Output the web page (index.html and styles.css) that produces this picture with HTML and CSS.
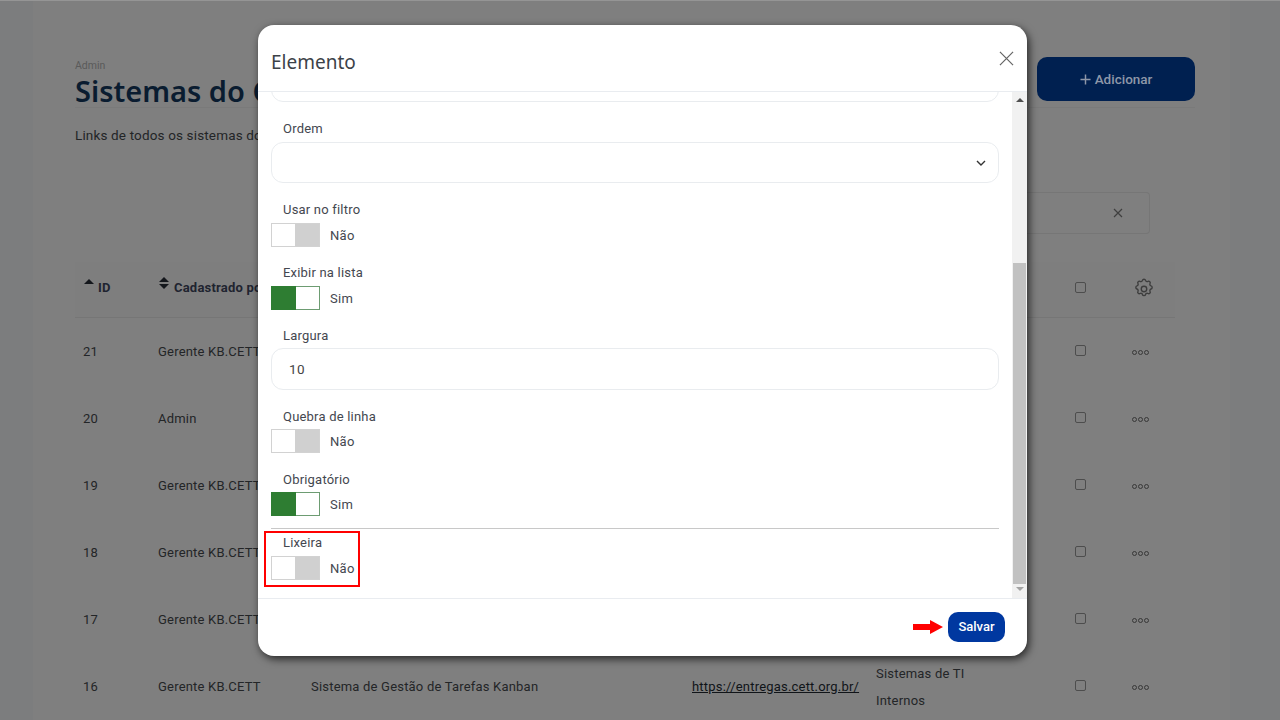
FILE: index.html
```html
<!DOCTYPE html>
<html lang="pt-BR">
<head>
<meta charset="utf-8">
<title>Sistemas do CETT</title>
<link rel="stylesheet" href="styles.css">
</head>
<body>
<main class="page">
  <header class="page-head">
    <div class="head-text">
      <div class="crumb">Admin</div>
      <h1>Sistemas do CETT</h1>
    </div>
    <button class="add-btn"><svg class="plus" viewBox="0 0 12 12"><path d="M6 .5v11M.5 6h11"/></svg>Adicionar</button>
  </header>
  <p class="intro">Links de todos os sistemas do</p>
  <div class="search-row">
    <div class="search"><svg class="x-small" viewBox="0 0 10 10"><path d="M1 1l8 8M9 1l-8 8"/></svg></div>
  </div>
  <section class="table">
    <div class="row head">
      <div class="c-id"><span class="sort up"></span>ID</div>
      <div class="c-by"><span class="sort both"></span>Cadastrado por</div>
      <div class="c-name"></div><div class="c-link"></div><div class="c-cat"></div>
      <div class="c-check"><span class="check"></span></div>
      <div class="c-menu"><svg class="gear" viewBox="0 0 24 24"><path d="M10.3 2.6c.4-1.6 3-1.6 3.4 0a1.8 1.8 0 0 0 2.6 1.1c1.4-.9 3.2.9 2.3 2.3a1.8 1.8 0 0 0 1.1 2.6c1.6.4 1.6 3 0 3.4a1.8 1.8 0 0 0-1.1 2.6c.9 1.4-.9 3.2-2.3 2.3a1.8 1.8 0 0 0-2.6 1.1c-.4 1.6-3 1.6-3.4 0a1.8 1.8 0 0 0-2.6-1.1c-1.4.9-3.2-.9-2.3-2.3a1.8 1.8 0 0 0-1.1-2.6c-1.6-.4-1.6-3 0-3.4A1.8 1.8 0 0 0 5.4 6c-.9-1.4.9-3.2 2.3-2.3a1.8 1.8 0 0 0 2.6-1.1z"/><circle cx="12" cy="12" r="3"/></svg></div>
    </div>
    <div class="row"><div class="c-id">21</div><div class="c-by">Gerente KB.CETT</div><div class="c-name"></div><div class="c-link"></div><div class="c-cat"></div><div class="c-check"><span class="check"></span></div><div class="c-menu"><span class="dots"><i></i><i></i><i></i></span></div></div>
    <div class="row"><div class="c-id">20</div><div class="c-by">Admin</div><div class="c-name"></div><div class="c-link"></div><div class="c-cat"></div><div class="c-check"><span class="check"></span></div><div class="c-menu"><span class="dots"><i></i><i></i><i></i></span></div></div>
    <div class="row"><div class="c-id">19</div><div class="c-by">Gerente KB.CETT</div><div class="c-name"></div><div class="c-link"></div><div class="c-cat"></div><div class="c-check"><span class="check"></span></div><div class="c-menu"><span class="dots"><i></i><i></i><i></i></span></div></div>
    <div class="row"><div class="c-id">18</div><div class="c-by">Gerente KB.CETT</div><div class="c-name"></div><div class="c-link"></div><div class="c-cat"></div><div class="c-check"><span class="check"></span></div><div class="c-menu"><span class="dots"><i></i><i></i><i></i></span></div></div>
    <div class="row"><div class="c-id">17</div><div class="c-by">Gerente KB.CETT</div><div class="c-name"></div><div class="c-link"></div><div class="c-cat"></div><div class="c-check"><span class="check"></span></div><div class="c-menu"><span class="dots"><i></i><i></i><i></i></span></div></div>
    <div class="row"><div class="c-id">16</div><div class="c-by">Gerente KB.CETT</div><div class="c-name">Sistema de Gestão de Tarefas Kanban</div><div class="c-link"><a href="#">https://entregas.cett.org.br/</a></div><div class="c-cat">Sistemas de TI Internos</div><div class="c-check"><span class="check"></span></div><div class="c-menu"><span class="dots"><i></i><i></i><i></i></span></div></div>
  </section>
</main>

<div class="modal">
  <div class="modal-head">
    <h2>Elemento</h2>
    <svg class="close" viewBox="0 0 16 16"><path d="M1 1l14 14M15 1L1 15"/></svg>
  </div>
  <div class="modal-mid">
    <div class="modal-body">
      <div class="input clipped"></div>
      <div class="field wide-gap">
        <label class="roomy">Ordem</label>
        <div class="input select"><svg class="chev" viewBox="0 0 10 6"><path d="M1 1l4 4 4-4"/></svg></div>
      </div>
      <div class="field">
        <label>Usar no filtro</label>
        <div class="toggle-line"><span class="toggle off"><b></b></span><span class="toggle-text">Não</span></div>
      </div>
      <div class="field">
        <label>Exibir na lista</label>
        <div class="toggle-line"><span class="toggle on"><b></b></span><span class="toggle-text">Sim</span></div>
      </div>
      <div class="field wide-gap">
        <label>Largura</label>
        <div class="input tall">10</div>
      </div>
      <div class="field wide-gap">
        <label class="snug">Quebra de linha</label>
        <div class="toggle-line"><span class="toggle off"><b></b></span><span class="toggle-text">Não</span></div>
      </div>
      <div class="field tight">
        <label class="snug">Obrigatório</label>
        <div class="toggle-line"><span class="toggle on"><b></b></span><span class="toggle-text">Sim</span></div>
      </div>
      <hr>
      <div class="field">
        <label>Lixeira</label>
        <div class="toggle-line"><span class="toggle off"><b></b></span><span class="toggle-text">Não</span></div>
      </div>
    </div>
    <div class="scrollbar">
      <span class="arrow-up"></span>
      <span class="thumb"></span>
      <span class="arrow-down"></span>
    </div>
  </div>
  <div class="modal-foot">
    <svg class="red-arrow" viewBox="0 0 30 14"><path d="M0 4h17V0l13 7-13 7v-4H0z"/></svg>
    <button class="save">Salvar</button>
  </div>
  <div class="highlight"></div>
</div>
</body>
</html>
```
FILE: styles.css
```css
* { box-sizing: border-box; }
html, body { margin: 0; height: 100%; overflow: hidden; }
body {
  background: #7c7d7e;
  border-top: 1px solid #959595;
  font-family: Roboto, "Liberation Sans", sans-serif;
  color: #232527;
}
.page {
  margin-left: 33px;
  width: 1197px;
  height: 719px;
  padding: 56px 35px 0 42px;
  background: #7f7f7f;
  overflow: hidden;
}
.page-head {
  display: flex;
  justify-content: space-between;
  align-items: flex-start;
  height: 51px;
  border-bottom: 1px solid #7a7a7a;
}
.crumb { font-size: 10.5px; line-height: 14px; margin-top: 2px; margin-bottom: -1px; color: #5a5a5a; }
h1 {
  margin: 0;
  font-family: "Noto Sans", sans-serif;
  font-size: 29px;
  line-height: 38px;
  font-weight: 600;
  color: #0a1c30;
  white-space: nowrap;
}
.add-btn {
  width: 158px;
  height: 44px;
  border: 0;
  border-radius: 10px;
  background: #002050;
  color: #8e97a8;
  font: 500 13.5px Roboto, sans-serif;
  display: flex;
  align-items: center;
  justify-content: center;
  gap: 4px;
}
.plus { width: 11px; height: 11px; fill: none; stroke: #8e97a8; stroke-width: 1.6; }
.intro { margin: 19px 0 0; font-size: 13.5px; line-height: 16px; letter-spacing: .15px; }
.search-row { display: flex; justify-content: flex-end; margin-top: 49px; padding-right: 45px; }
.search {
  width: 300px;
  height: 42px;
  border: 1px solid #767676;
  border-left: 0;
  border-radius: 0 4px 4px 0;
  display: flex;
  justify-content: flex-end;
  align-items: center;
  padding-right: 26px;
}
.x-small { width: 10px; height: 10px; fill: none; stroke: #3f3f3f; stroke-width: 1.2; }
.table { width: 1100px; margin-top: 28px; }
.row {
  display: grid;
  grid-template-columns: 75px 153px 381px 184px 202px 62px 43px;
  height: 67px;
  align-items: center;
  font-size: 13px;
  line-height: 28px;
  letter-spacing: .2px;
}
.row > div { padding-left: 8px; }
.row.head {
  height: 56px;
  padding-bottom: 3px;
  background: #7e7e7e;
  border-bottom: 1px solid #767676;
  font-weight: 700;
  color: #1f2430;
}
.sort { display: inline-block; width: 15px; height: 10px; position: relative; vertical-align: 3px; }
.sort.both { width: 16px; }
.sort::before, .sort.both::after {
  content: "";
  position: absolute;
  left: 1px;
  border-left: 5px solid transparent;
  border-right: 5px solid transparent;
}
.sort.up::before { top: 0; border-bottom: 5px solid #14171c; }
.sort.both::before { top: -2px; border-bottom: 5px solid #14171c; }
.sort.both::after { top: 5px; border-top: 5px solid #14171c; }
.c-link a { color: #101418; }
.c-cat { line-height: 27px; padding-right: 85px; }
.c-check { display: flex; }
.check {
  width: 11px;
  height: 11px;
  border: 1.4px solid #4d4d4d;
  border-radius: 2px;
  display: block;
  margin: -2px 0 0 -3px;
}
.c-menu { display: flex; }
.dots { display: flex; gap: 1px; margin: 2px 0 0 -8px; }
.dots i { width: 5px; height: 5px; border: 1.6px solid #383838; border-radius: 50%; display: block; }
.gear { width: 22px; height: 22px; margin: 1px 0 0 -7px; fill: none; stroke: #3d3d3d; stroke-width: 1.5; }

/* Modal */
.modal {
  position: absolute;
  left: 258px;
  top: 25px;
  width: 769px;
  height: 631px;
  background: #fff;
  border-radius: 16px;
  box-shadow: 2px 3px 8px rgba(0,0,0,.7);
  display: flex;
  flex-direction: column;
  overflow: hidden;
}
.modal-head {
  height: 67px;
  flex: none;
  border-bottom: 1px solid #e9ecf0;
  display: flex;
  justify-content: space-between;
  align-items: center;
  padding: 0 13px 0 13px;
}
h2 {
  margin: 8px 0 0;
  font-family: "Noto Sans", sans-serif;
  font-size: 19px;
  font-weight: 400;
  color: #3c4248;
}
.close { width: 15px; height: 15px; margin-top: 1px; fill: none; stroke: #666; stroke-width: 1.3; }
.modal-mid { flex: 1; display: flex; min-height: 0; }
.modal-body { flex: 1; padding: 0 13px; overflow: hidden; }
.scrollbar {
  width: 15px;
  flex: none;
  background: #f1f1f1;
  display: flex;
  flex-direction: column;
  align-items: center;
  padding: 6px 1px 4px;
}
.thumb { width: 13px; height: 321px; background: #c1c1c1; margin: 161px 0 3px; }
.arrow-up { border-left: 4px solid transparent; border-right: 4px solid transparent; border-bottom: 4px solid #505050; }
.arrow-down { border-left: 4px solid transparent; border-right: 4px solid transparent; border-top: 4px solid #a3a3a3; }
.input {
  height: 41px;
  border: 1px solid #e9ecef;
  border-radius: 12px;
  display: flex;
  align-items: center;
  padding: 0 17px;
  font-size: 13.5px;
  letter-spacing: .3px;
  color: #444;
}
.clipped { margin-top: -31px; margin-bottom: 17px; }
.select { justify-content: flex-end; padding-right: 12px; }
.tall { height: 42px; }
.chev { width: 10px; height: 6px; fill: none; stroke: #333; stroke-width: 1.4; }
.field { margin-bottom: 16px; }
.field.wide-gap { margin-bottom: 17px; }
.field.tight { margin-bottom: 12px; }
label {
  display: block;
  height: 20px;
  line-height: 20px;
  padding-left: 12px;
  margin-bottom: 2px;
  font-size: 13px;
  letter-spacing: .2px;
  color: #44474f;
}
label.roomy { margin-bottom: 3px; }
label.snug { margin-bottom: 1px; }
.toggle-line {
  display: flex;
  align-items: center;
  height: 25px;
  gap: 10px;
  font-size: 13px;
  letter-spacing: .3px;
  color: #44474f;
}
.toggle-text { padding-top: 2px; }
.toggle { width: 49px; height: 24px; display: flex; border: 1px solid #d2d2d2; background: #fff; }
.toggle.off { justify-content: flex-end; }
.toggle.off b { width: 24px; background: #d0d0d0; }
.toggle.on { border-color: #6d9c72; }
.toggle.on b { width: 25px; margin: -1px 0 -1px -1px; background: #2e7d32; }
hr { margin: 0 0 4px; border: 0; border-top: 1px solid #c8c8c8; height: 1px; }
.modal-foot {
  height: 58px;
  flex: none;
  border-top: 1px solid #e9ecf0;
  display: flex;
  justify-content: flex-end;
  align-items: center;
  gap: 5px;
  padding: 0 22px 2px 0;
}
.red-arrow { width: 30px; height: 14px; fill: #f00; }
.save {
  width: 57px;
  height: 30px;
  border: 0;
  border-radius: 10px;
  background: #0038a0;
  color: #fff;
  font: 500 13px Roboto, sans-serif;
  padding: 0;
}
.highlight {
  position: absolute;
  left: 6px;
  top: 506px;
  width: 96px;
  height: 56px;
  border: 2px solid #f00;
  pointer-events: none;
}
```
